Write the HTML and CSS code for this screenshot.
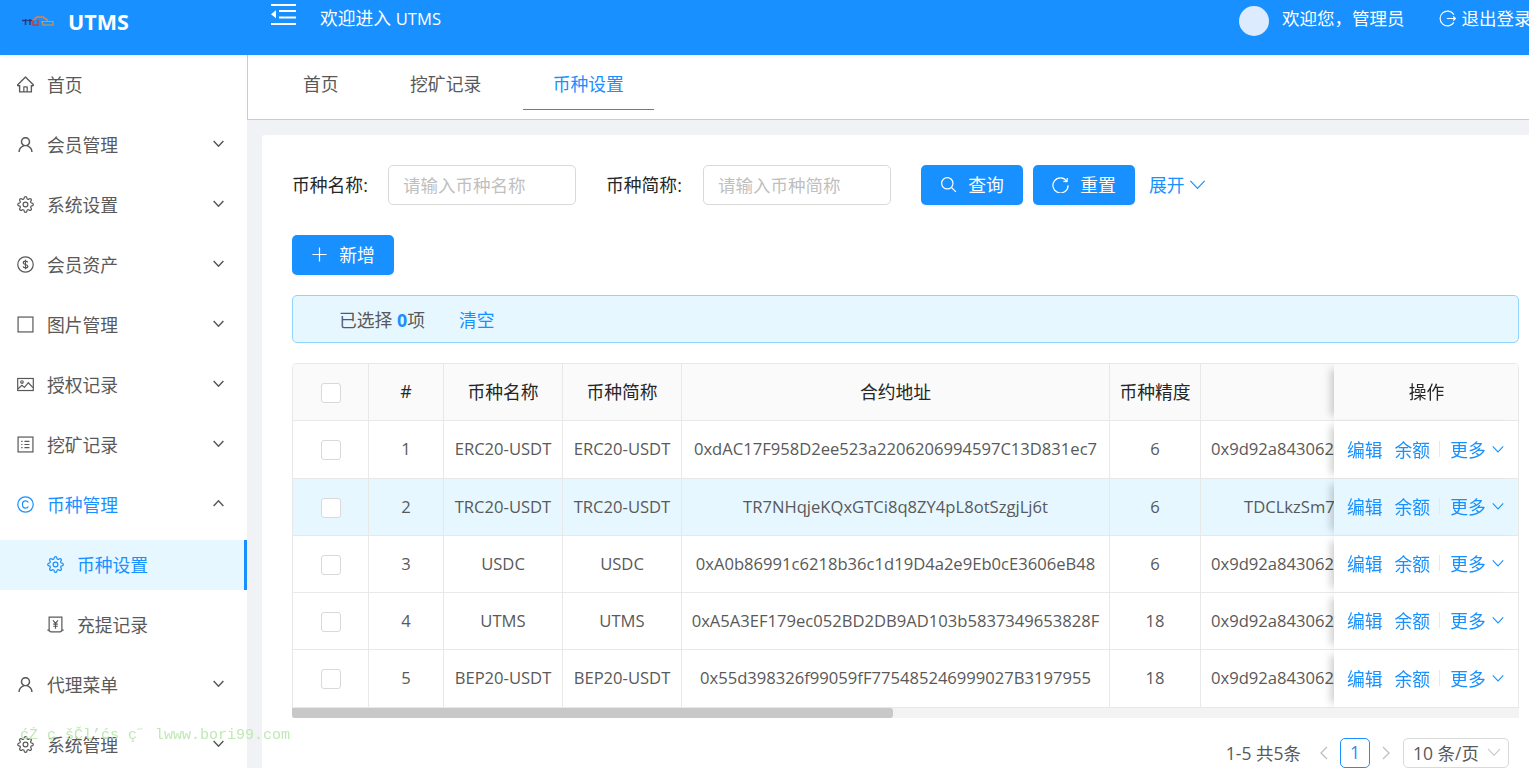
FILE: index.html
```html
<!DOCTYPE html>
<html lang="zh-CN">
<head>
    <meta charset="UTF-8">
    <meta name="viewport" content="width=device-width, initial-scale=1.0">
    <title>币种设置 - UTMS</title>
    <link rel="stylesheet" href="styles.css">
</head>
<body>
    <svg class="sprite" xmlns="http://www.w3.org/2000/svg">
        <symbol id="i-home" viewBox="64 64 896 896"><path fill="currentColor" stroke="none" d="M946.5 505L560.1 118.8l-25.9-25.9a31.5 31.5 0 0 0-44.4 0L77.5 505a63.9 63.9 0 0 0-18.8 46c.4 35.2 29.7 63.3 64.9 63.3h42.5V940h691.8V614.3h43.4c17.1 0 33.2-6.7 45.3-18.8a63.6 63.6 0 0 0 18.7-45.3c0-17-6.7-33.1-18.8-45.2zM568 868H456V664h112v204zm217.9-325.7V868H632V640c0-22.1-17.9-40-40-40H432c-22.1 0-40 17.9-40 40v228H238.1V542.3h-96l370-369.7 23.1 23.1L882 542.3h-96.1z"/></symbol>
        <symbol id="i-user" viewBox="64 64 896 896"><path fill="currentColor" stroke="none" d="M858.5 763.6a374 374 0 0 0-80.6-119.5 375.63 375.63 0 0 0-119.5-80.6c-.4-.2-.8-.3-1.2-.5C719.5 518 760 444.7 760 362c0-137-111-248-248-248S264 225 264 362c0 82.7 40.5 156 102.8 201.1-.4.2-.8.3-1.2.5-44.8 18.9-85 46-119.5 80.6a375.63 375.63 0 0 0-80.6 119.5A371.7 371.7 0 0 0 136 901.8a8 8 0 0 0 8 8.2h60c4.4 0 7.9-3.5 8-7.8 2-77.2 33-149.5 87.8-204.3 56.7-56.7 132-87.9 212.2-87.9s155.5 31.2 212.2 87.9C779 752.7 810 825 812 902.2c.1 4.4 3.6 7.8 8 7.8h60a8 8 0 0 0 8-8.2c-1-47.8-10.9-94.3-29.5-138.2zM512 534c-45.9 0-89.1-17.9-121.6-50.4S340 407.9 340 362c0-45.9 17.9-89.1 50.4-121.6S466.1 190 512 190s89.1 17.9 121.6 50.4S684 316.1 684 362c0 45.9-17.9 89.1-50.4 121.6S557.9 534 512 534z"/></symbol>
        <symbol id="i-setting" viewBox="0 0 24 24"><circle cx="12" cy="12" r="3.4"/><path d="M19.4 15a1.65 1.65 0 0 0 .33 1.82l.06.06a2 2 0 0 1 0 2.83 2 2 0 0 1-2.83 0l-.06-.06a1.65 1.65 0 0 0-1.82-.33 1.65 1.65 0 0 0-1 1.51V21a2 2 0 0 1-2 2 2 2 0 0 1-2-2v-.09A1.65 1.65 0 0 0 9 19.4a1.65 1.65 0 0 0-1.82.33l-.06.06a2 2 0 0 1-2.83 0 2 2 0 0 1 0-2.83l.06-.06a1.65 1.65 0 0 0 .33-1.82 1.65 1.65 0 0 0-1.51-1H3a2 2 0 0 1-2-2 2 2 0 0 1 2-2h.09A1.65 1.65 0 0 0 4.6 9a1.65 1.65 0 0 0-.33-1.82l-.06-.06a2 2 0 0 1 0-2.83 2 2 0 0 1 2.83 0l.06.06a1.65 1.65 0 0 0 1.82.33H9a1.65 1.65 0 0 0 1-1.51V3a2 2 0 0 1 2-2 2 2 0 0 1 2 2v.09a1.65 1.65 0 0 0 1 1.51 1.65 1.65 0 0 0 1.82-.33l.06-.06a2 2 0 0 1 2.83 0 2 2 0 0 1 0 2.83l-.06.06a1.65 1.65 0 0 0-.33 1.82V9a1.65 1.65 0 0 0 1.51 1H21a2 2 0 0 1 2 2 2 2 0 0 1-2 2h-.09a1.65 1.65 0 0 0-1.51 1z"/></symbol>
        <symbol id="i-dollar" viewBox="0 0 24 24"><circle cx="12" cy="12" r="10.9"/><path d="M15.2 9.1c-.3-1.3-1.6-2-3.2-2-1.8 0-3.2.9-3.2 2.4 0 3.400 6.500 1.600 6.500 5 0 1.500-1.500 2.400-3.300 2.400-1.700 0-3.100-.8-3.400-2.200M12 5.300v13.400"/></symbol>
        <symbol id="i-border" viewBox="0 0 24 24"><rect x="1.500" y="1.500" width="21" height="21"/></symbol>
        <symbol id="i-picture" viewBox="0 0 24 24"><rect x="1" y="3.500" width="22" height="17"/><circle cx="7" cy="8.500" r="1.800"/><path d="M1.500 18l5.500-5 3.500 3 5.500-6.500 6.500 7"/></symbol>
        <symbol id="i-profile" viewBox="0 0 24 24"><rect x="1.500" y="1.500" width="21" height="21"/><path d="M10.500 7.500h7M10.500 12h7M10.500 16.500h7M6 7.500h1.800M6 12h1.800M6 16.500h1.800"/></symbol>
        <symbol id="i-copyright" viewBox="0 0 24 24"><circle cx="12" cy="12" r="10.900"/><path d="M16 9.300c-.7-1.500-2.100-2.400-3.800-2.400-2.800 0-4.500 2.200-4.500 5.100s1.700 5.100 4.500 5.100c1.700 0 3.100-.9 3.800-2.400"/></symbol>
        <symbol id="i-money" viewBox="0 0 24 24"><path d="M3 1.500h18v19.500l-2.500 1.500h-13L3 21zM.5 20h3.500M20 20h3.500"/><path d="M8.500 6L12 10.500 15.500 6M12 10.500V18M8.800 11.500h6.400M8.800 14.500h6.400"/></symbol>
        <symbol id="i-down" viewBox="0 0 24 24"><path d="M3 7.500l9 9.500 9-9.500"/></symbol>
        <symbol id="i-up" viewBox="0 0 24 24"><path d="M3 16.500l9-9.500 9 9.500"/></symbol>
        <symbol id="i-search" viewBox="0 0 24 24"><circle cx="10.300" cy="10.300" r="8"/><path d="M16.200 16.200l6.300 6.300"/></symbol>
        <symbol id="i-reload" viewBox="0 0 24 24"><path d="M21 7.500A10.700 10.700 0 1 0 22.700 13"/><path d="M21.600 2.800l-.4 5.200-5.100-.5"/></symbol>
        <symbol id="i-plus" viewBox="0 0 24 24"><path d="M12 2v20M2 12h20"/></symbol>
        <symbol id="i-logout" viewBox="0 0 24 24"><path d="M21 6.500A10.500 10.500 0 1 0 21 17.500"/><path d="M11 12h12M20 9.200l3 2.800-3 2.800"/></symbol>
    </svg>

    <div class="app">
        <header class="topbar">
            <div class="brand">
                <svg class="brand-logo" viewBox="0 0 32 12">
                    <path d="M2 5.500h9l4-3.500h6l5 3.500" fill="none" stroke="#e8813c" stroke-width="1.600"/>
                    <path d="M0 5.500h10M3.500 4v6M8 4v6" fill="none" stroke="#2a3a78" stroke-width="1.500"/>
                    <path d="M11 5v5h5V5" fill="none" stroke="#c63a3a" stroke-width="1.500"/>
                    <path d="M20 6.500h11v3.500H21z" fill="none" stroke="#d89a3c" stroke-width="1.200"/>
                </svg>
                <span class="brand-name">UTMS</span>
            </div>
            <svg class="fold" viewBox="0 0 25 21">
                <path d="M0 1h25M8 7h17M8 13.500h17M0 20h25" fill="none" stroke="#fff" stroke-width="2"/>
                <path d="M0 10.300l5-4v8z" fill="#fff"/>
            </svg>
            <span class="welcome">欢迎进入 <span class="latin">UTMS</span></span>
            <div class="account">
                <span class="avatar"></span>
                <span class="account-name">欢迎您，管理员</span>
                <span class="logout"><svg class="ico"><use href="#i-logout"/></svg>退出登录</span>
            </div>
        </header>

        <div class="body">
            <aside class="sidebar">
                <a class="menu-item"><svg class="ico"><use href="#i-home"/></svg>首页</a>
                <a class="menu-item"><svg class="ico"><use href="#i-user"/></svg>会员管理<svg class="caret"><use href="#i-down"/></svg></a>
                <a class="menu-item"><svg class="ico"><use href="#i-setting"/></svg>系统设置<svg class="caret"><use href="#i-down"/></svg></a>
                <a class="menu-item"><svg class="ico"><use href="#i-dollar"/></svg>会员资产<svg class="caret"><use href="#i-down"/></svg></a>
                <a class="menu-item"><svg class="ico"><use href="#i-border"/></svg>图片管理<svg class="caret"><use href="#i-down"/></svg></a>
                <a class="menu-item"><svg class="ico"><use href="#i-picture"/></svg>授权记录<svg class="caret"><use href="#i-down"/></svg></a>
                <a class="menu-item"><svg class="ico"><use href="#i-profile"/></svg>挖矿记录<svg class="caret"><use href="#i-down"/></svg></a>
                <a class="menu-item open"><svg class="ico"><use href="#i-copyright"/></svg>币种管理<svg class="caret"><use href="#i-up"/></svg></a>
                <a class="menu-item sub active"><svg class="ico"><use href="#i-setting"/></svg>币种设置</a>
                <a class="menu-item sub"><svg class="ico"><use href="#i-money"/></svg>充提记录</a>
                <a class="menu-item"><svg class="ico"><use href="#i-user"/></svg>代理菜单<svg class="caret"><use href="#i-down"/></svg></a>
                <a class="menu-item"><svg class="ico"><use href="#i-setting"/></svg>系统管理<svg class="caret"><use href="#i-down"/></svg></a>
            </aside>

            <main class="content">
                <nav class="tabs">
                    <a class="tab">首页</a>
                    <a class="tab">挖矿记录</a>
                    <a class="tab on">币种设置</a>
                </nav>

                <div class="page">
                    <section class="card">
                        <form class="filter">
                            <label class="filter-label">币种名称:</label>
                            <input class="filter-input" placeholder="请输入币种名称">
                            <label class="filter-label second">币种简称:</label>
                            <input class="filter-input" placeholder="请输入币种简称">
                            <button class="btn first" type="button"><svg class="ico"><use href="#i-search"/></svg>查询</button>
                            <button class="btn" type="button"><svg class="ico"><use href="#i-reload"/></svg>重置</button>
                            <a class="expand">展开<svg class="expand-ico"><use href="#i-down"/></svg></a>
                        </form>

                        <div class="toolbar">
                            <button class="btn" type="button"><svg class="ico"><use href="#i-plus"/></svg>新增</button>
                        </div>

                        <div class="alert">
                            <span>已选择 <b>0</b>项</span>
                            <a class="alert-clear">清空</a>
                        </div>

                        <div class="table-wrap">
                            <table class="grid">
                                <colgroup>
                                    <col class="c-check"><col class="c-no"><col class="c-name"><col class="c-name">
                                    <col class="c-addr"><col class="c-dec"><col class="c-addr"><col class="c-op">
                                </colgroup>
                                <thead>
                                    <tr>
                                        <th><span class="check"></span></th>
                                        <th>#</th>
                                        <th>币种名称</th>
                                        <th>币种简称</th>
                                        <th>合约地址</th>
                                        <th>币种精度</th>
                                        <th></th>
                                        <th class="op">操作</th>
                                    </tr>
                                </thead>
                                <tbody>
                                    <tr>
                                        <td><span class="check"></span></td>
                                        <td>1</td>
                                        <td>ERC20-USDT</td>
                                        <td>ERC20-USDT</td>
                                        <td>0xdAC17F958D2ee523a2206206994597C13D831ec7</td>
                                        <td>6</td>
                                        <td class="wallet">0x9d92a8430624</td>
                                        <td class="op"><div class="op-links"><a>编辑</a><a>余额</a><i></i><a>更多<svg class="more-ico"><use href="#i-down"/></svg></a></div></td>
                                    </tr>
                                    <tr class="hover">
                                        <td><span class="check"></span></td>
                                        <td>2</td>
                                        <td>TRC20-USDT</td>
                                        <td>TRC20-USDT</td>
                                        <td>TR7NHqjeKQxGTCi8q8ZY4pL8otSzgjLj6t</td>
                                        <td>6</td>
                                        <td class="wallet tron">TDCLkzSm7</td>
                                        <td class="op"><div class="op-links"><a>编辑</a><a>余额</a><i></i><a>更多<svg class="more-ico"><use href="#i-down"/></svg></a></div></td>
                                    </tr>
                                    <tr>
                                        <td><span class="check"></span></td>
                                        <td>3</td>
                                        <td>USDC</td>
                                        <td>USDC</td>
                                        <td>0xA0b86991c6218b36c1d19D4a2e9Eb0cE3606eB48</td>
                                        <td>6</td>
                                        <td class="wallet">0x9d92a8430624</td>
                                        <td class="op"><div class="op-links"><a>编辑</a><a>余额</a><i></i><a>更多<svg class="more-ico"><use href="#i-down"/></svg></a></div></td>
                                    </tr>
                                    <tr>
                                        <td><span class="check"></span></td>
                                        <td>4</td>
                                        <td>UTMS</td>
                                        <td>UTMS</td>
                                        <td>0xA5A3EF179ec052BD2DB9AD103b5837349653828F</td>
                                        <td>18</td>
                                        <td class="wallet">0x9d92a8430624</td>
                                        <td class="op"><div class="op-links"><a>编辑</a><a>余额</a><i></i><a>更多<svg class="more-ico"><use href="#i-down"/></svg></a></div></td>
                                    </tr>
                                    <tr>
                                        <td><span class="check"></span></td>
                                        <td>5</td>
                                        <td>BEP20-USDT</td>
                                        <td>BEP20-USDT</td>
                                        <td>0x55d398326f99059fF775485246999027B3197955</td>
                                        <td>18</td>
                                        <td class="wallet">0x9d92a8430624</td>
                                        <td class="op"><div class="op-links"><a>编辑</a><a>余额</a><i></i><a>更多<svg class="more-ico"><use href="#i-down"/></svg></a></div></td>
                                    </tr>
                                </tbody>
                            </table>
                        </div>
                        <div class="hscroll"><div class="hscroll-thumb"></div></div>

                        <div class="pager">
                            <span class="pager-total">1-5 共5条</span>
                            <svg class="pager-arrow"><path d="M9 3L3 9l6 6"/></svg>
                            <span class="pager-num">1</span>
                            <svg class="pager-arrow"><path d="M3 3l6 6-6 6"/></svg>
                            <span class="pager-size">10 条/页<svg class="pager-caret"><use href="#i-down"/></svg></span>
                        </div>
                    </section>
                </div>
            </main>
        </div>
    </div>

    <div class="watermark">ćŻ ç šČl’ćs ç˝ lwww.bori99.com</div>
</body>
</html>
```
FILE: styles.css
```css
*{
    margin: 0;
    padding: 0;
    box-sizing: border-box;
}
html,body{
    height: 100%;
    overflow: hidden;
}
body{
    font-family: "Open Sans", "Noto Sans CJK SC", sans-serif;
    font-size: 17.8px;
    color: #595959;
    background: #fff;
}
a{
    color: inherit;
    text-decoration: none;
}
.sprite{
    display: none;
}
.latin{
    font-size: 16.6px;
}
svg{
    fill: none;
    stroke: currentColor;
    flex: none;
}
.ico{
    width: 17px;
    height: 17px;
    stroke-width: 1.7;
}
.app{
    display: flex;
    flex-direction: column;
    height: 100vh;
    overflow: hidden;
}

/* 顶部 */
.topbar{
    display: flex;
    flex: none;
    height: 55px;
    background: #1890ff;
    color: #fff;
    box-shadow: 0 1px 4px rgba(0, 21, 41, .08);
    position: relative;
    z-index: 2;
}
.brand{
    display: flex;
    align-items: center;
    width: 271px;
    height: 42px;
    padding-left: 22px;
}
.brand-logo{
    width: 32px;
    height: 12px;
    margin-right: 14px;
    stroke: none;
}
.brand-name{
    font-size: 21.5px;
    font-weight: 700;
}
.fold{
    width: 25px;
    height: 21px;
    margin-top: 4px;
    stroke: none;
}
.welcome{
    margin: 5px 0 0 24px;
    line-height: 26px;
}
.account{
    display: flex;
    align-items: flex-start;
    width: 290px;
    margin-left: auto;
    font-size: 17.5px;
    white-space: nowrap;
    overflow: hidden;
}
.avatar{
    flex: none;
    width: 30px;
    height: 30px;
    margin-top: 6px;
    border-radius: 50%;
    background: #dcebfd;
}
.account-name{
    margin: 5px 0 0 13px;
    line-height: 26px;
}
.logout{
    display: flex;
    align-items: center;
    gap: 6px;
    margin: 5px 0 0 34px;
    line-height: 26px;
}

/* 左侧菜单 */
.body{
    display: flex;
    flex: 1;
    min-height: 0;
}
.sidebar{
    display: flex;
    flex-direction: column;
    flex: none;
    gap: 10px;
    width: 247px;
    padding-top: 5px;
    background: #fff;
}
.menu-item{
    display: flex;
    align-items: center;
    flex: none;
    height: 50px;
    padding-left: 17px;
    padding-bottom: 2px;
}
.menu-item .ico{
    margin-right: 13px;
}
.menu-item .caret{
    width: 13px;
    height: 13px;
    margin-left: auto;
    margin-right: 22px;
    margin-bottom: 2px;
    stroke-width: 2.800;
}
.menu-item.open{
    color: #1890ff;
}
.menu-item.open .caret{
    color: #595959;
}
.menu-item.sub{
    padding-left: 47px;
}
.menu-item.active{
    color: #1890ff;
    background: #e6f7ff;
    border-right: 3px solid #1890ff;
}

/* 右侧内容 */
.content{
    display: flex;
    flex-direction: column;
    flex: 1;
    min-width: 0;
    background: #f0f2f5;
}
.tabs{
    display: flex;
    flex: none;
    gap: 11.5px;
    height: 65px;
    padding-left: 25px;
    background: #fff;
    border-left: 1px solid #ccc;
    border-bottom: 1px solid #ccc;
}
.tab{
    height: 55px;
    padding: 0 30px;
    line-height: 58px;
}
.tab.on{
    color: #1890ff;
    border-bottom: 1px solid #1890ff;
}
.page{
    flex: 1;
    min-height: 0;
    padding: 15px 0 0 15px;
}
.card{
    height: 100%;
    padding: 30px 10px 0 30px;
    background: #fff;
    border-radius: 3px 0 0 0;
}

/* 查询 */
.filter{
    display: flex;
    align-items: center;
    height: 40px;
}
.filter-label{
    width: 96px;
    padding-bottom: 2px;
    color: #262626;
    white-space: nowrap;
}
.filter-label.second{
    width: 96px;
    margin-left: 31px;
    text-indent: -1px;
}
.filter-input{
    width: 188px;
    height: 40px;
    padding: 0 13px 0 14px;
    font: inherit;
    font-size: 17.5px;
    color: #595959;
    border: 1px solid #d9d9d9;
    border-radius: 5px;
    outline: none;
}
.filter-input::placeholder{
    color: #bfbfbf;
}
.btn{
    display: inline-flex;
    align-items: center;
    justify-content: center;
    gap: 11px;
    width: 102px;
    height: 40px;
    padding-bottom: 2px;
    font: inherit;
    color: #fff;
    background: #1890ff;
    border: 0;
    border-radius: 5px;
    box-shadow: 0 2px 0 rgba(0, 0, 0, .03);
}
.btn.first{
    margin-left: 30px;
}
.btn + .btn{
    margin-left: 10px;
}
.expand{
    display: flex;
    align-items: center;
    gap: 3px;
    margin-left: 14px;
    padding-bottom: 2px;
    color: #1890ff;
}
.expand-ico{
    width: 19px;
    height: 19px;
    stroke-width: 1.500;
}
.toolbar{
    display: flex;
    margin-top: 30px;
}
.alert{
    display: flex;
    align-items: center;
    gap: 34px;
    height: 48px;
    margin-top: 20px;
    padding-left: 46px;
    padding-bottom: 1px;
    background: #e6f7ff;
    border: 1px solid #91d5ff;
    border-radius: 5px;
}
.alert b{
    color: #1890ff;
}
.alert-clear{
    color: #1890ff;
}

/* 表格 */
.table-wrap{
    margin-top: 20px;
    overflow: hidden;
    border-top: 1px solid #e8e8e8;
    border-left: 1px solid #e8e8e8;
    border-radius: 5px 5px 0 0;
}
.grid{
    width: 1521px;
    table-layout: fixed;
    border-collapse: separate;
    border-spacing: 0;
}
.c-check{ width: 76px; }
.c-no{ width: 75px; }
.c-name{ width: 119px; }
.c-addr{ width: 428px; }
.c-dec{ width: 91px; }
.c-op{ width: 185px; }
.grid th,.grid td{
    padding-bottom: 2px;
    text-align: center;
    white-space: nowrap;
    overflow: hidden;
    border-right: 1px solid #e8e8e8;
    border-bottom: 1px solid #e8e8e8;
    background: #fff;
}
.grid th{
    height: 57px;
    font-weight: 400;
    color: #262626;
    background: #fafafa;
}
.grid td{
    height: 57px;
    font-size: 16.6px;
}
.grid tbody tr:first-child td,.grid tbody tr:last-child td{
    height: 58px;
}
.grid tr.hover td{
    background: #e6f7ff;
}
.grid td.wallet{
    padding-left: 10px;
    text-align: left;
}
.grid td.wallet.tron{
    padding-left: 43px;
}
.grid .op{
    position: sticky;
    right: 0;
    z-index: 1;
    overflow: visible;
    box-shadow: -8px 0 8px -5px rgba(0, 0, 0, .2);
}
.grid th.op{
    padding-left: 1px;
}
.op-links{
    display: flex;
    align-items: center;
    gap: 12px;
    padding-left: 13px;
    font-size: 17.8px;
    color: #1890ff;
}
.op-links a{
    display: flex;
    align-items: center;
    gap: 5px;
}
.op-links i{
    width: 1px;
    height: 16px;
    margin-left: -3px;
    margin-right: -2px;
    background: #e8e8e8;
}
.more-ico{
    width: 14px;
    height: 14px;
    stroke-width: 1.800;
}
.check{
    display: inline-block;
    width: 20px;
    height: 20px;
    vertical-align: middle;
    background: #fff;
    border: 1px solid #d9d9d9;
    border-radius: 3px;
}
.hscroll{
    height: 10px;
    background: #f3f3f3;
}
.hscroll-thumb{
    width: 601px;
    height: 100%;
    background: #c8c8c8;
    border-radius: 0 3px 3px 3px;
}

/* 分页 */
.pager{
    display: flex;
    align-items: center;
    justify-content: flex-end;
    height: 30px;
    margin-top: 20px;
    padding-right: 10px;
    font-size: 17.5px;
}
.pager-total{
    margin-right: 17px;
    padding-bottom: 2px;
}
.pager-arrow{
    width: 12px;
    height: 18px;
    stroke: #bfbfbf;
    stroke-width: 1.300;
}
.pager-num{
    width: 30px;
    height: 30px;
    margin: 0 10px;
    line-height: 27px;
    text-align: center;
    color: #1890ff;
    border: 1px solid #1890ff;
    border-radius: 5px;
}
.pager-size{
    display: flex;
    align-items: center;
    justify-content: space-between;
    width: 106px;
    height: 30px;
    margin-left: 11px;
    padding: 0 6px 2px 9px;
    border: 1px solid #d9d9d9;
    border-radius: 5px;
    white-space: nowrap;
}
.pager-caret{
    width: 16px;
    height: 16px;
    stroke: #bfbfbf;
    stroke-width: 1.600;
}

/* 水印 */
.watermark{
    position: fixed;
    left: 20px;
    top: 727px;
    font: 15px/18px "Liberation Mono", monospace;
    color: #bfe8b5;
    white-space: nowrap;
    pointer-events: none;
    z-index: 5;
}
```
